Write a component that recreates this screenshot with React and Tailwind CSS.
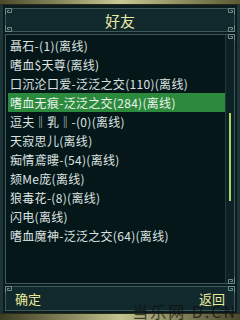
import React from "react";

const friends = [
  "聶石-(1)(离线)",
  "嗜血$天尊(离线)",
  "口沉沦口爱-泛泛之交(110)(离线)",
  "嗜血无痕-泛泛之交(284)(离线)",
  "逗夫‖乳‖-(0)(离线)",
  "天寂思儿(离线)",
  "痴情鳶瞜-(54)(离线)",
  "颏Me庞(离线)",
  "狼毒花-(8)(离线)",
  "闪电(离线)",
  "嗜血魔神-泛泛之交(64)(离线)",
];

// Esquina decorativa del marco
const Corner = ({ className }) => (
  <svg width="7" height="7" viewBox="0 0 7 7" className={className}>
    <path d="M0.5 6.5V0.5H6.5V4.5H2.5V2.5H4.5" fill="none" stroke="#6f8f86" strokeWidth="1" />
  </svg>
);

export default function App() {
  const selected = 3;

  return (
    <div
      className="w-[240px] h-[320px] bg-[#0b1c1e] flex flex-col overflow-hidden relative"
      style={{ fontFamily: '"Noto Sans CJK SC", "Noto Sans", sans-serif' }}
    >
      {/* barra dorada superior */}
      <div className="h-[5px] bg-gradient-to-r from-[#4b4b2c] via-[#c9c995] to-[#5a5a34] border-b border-[#2a2a18]" />

      <div className="flex-1 flex flex-col border-x-[3px] border-[#1f3436] px-[2px] pt-[3px] pb-[1px] gap-[2px]">
        {/* titulo */}
        <div className="relative h-[24px] border border-[#3d5a58] bg-[#11292c] flex items-center justify-center">
          <Corner className="absolute -left-[1px] -top-[1px]" />
          <Corner className="absolute -right-[1px] -top-[1px] -scale-x-100" />
          <Corner className="absolute -left-[1px] -bottom-[1px] -scale-y-100" />
          <Corner className="absolute -right-[1px] -bottom-[1px] -scale-100" />
          <span className="text-[15px] leading-none text-[#e9e9a8]">好友</span>
        </div>

        {/* lista */}
        <div className="relative h-[250px] border border-[#3d5a58] bg-[#061719] flex">
          <Corner className="absolute -right-[1px] -top-[1px] -scale-x-100" />
          <Corner className="absolute -right-[1px] -bottom-[1px] -scale-100" />
          <div className="flex-1 flex flex-col pt-[1px] pl-[2px]">
            {friends.map((f, i) => (
              <div
                key={f}
                className={`h-[19px] flex items-center pl-[2px] text-[12px] tracking-[0.3px] leading-none whitespace-nowrap ${
                  i === selected ? "bg-[#2b8a3c] text-[#eef4ee]" : "text-[#dde3e1]"
                }`}
              >
                {f}
              </div>
            ))}
          </div>
          <div className="w-[9px] flex justify-center border-l border-[#22393a] bg-[#0d2224]">
            <div className="mt-[78px] w-[2px] h-[88px] bg-[#a9d867]" />
          </div>
        </div>

        {/* botones */}
        <div className="relative h-[25px] border border-[#3d5a58] bg-[#11292c] flex items-center justify-between px-[9px]">
          <Corner className="absolute -left-[1px] -top-[1px]" />
          <Corner className="absolute -right-[1px] -top-[1px] -scale-x-100" />
          <span className="text-[13px] leading-none text-[#eaea9a]">确定</span>
          <span className="text-[13px] leading-none text-[#eaea9a]">返回</span>
        </div>
      </div>

      {/* barra dorada inferior */}
      <div className="h-[7px] bg-gradient-to-r from-[#3d3d24] via-[#c4c490] to-[#4a4a2c] border-t border-[#2a2a18]" />

      {/* marca de agua */}
      <div className="absolute right-[3px] bottom-[1px] text-[16px] leading-none text-[#101010] opacity-70 tracking-[2px] pointer-events-none">
        当乐网 D.CN
      </div>
    </div>
  );
}
